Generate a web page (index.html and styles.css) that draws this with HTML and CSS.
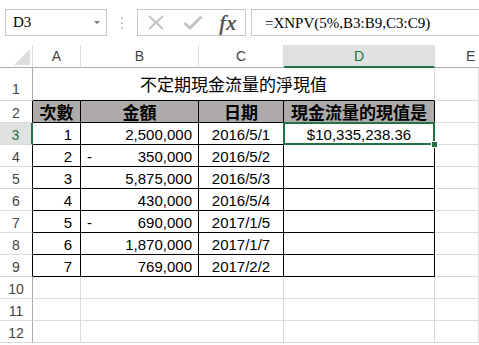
FILE: index.html
```html
<!DOCTYPE html>
<html lang="zh-Hant">
<head>
    <meta charset="UTF-8">
    <title>XNPV</title>
    <link rel="stylesheet" href="styles.css">
</head>
<body>

    <!-- Formula bar -->
    <div class="formula-bar">
        <div class="name-box">
            <span>D3</span>
            <span class="arrow"></span>
        </div>
        <div class="grip"><i></i><i></i><i></i></div>
        <div class="fx-box">
            <svg class="icon" width="18" height="15" viewBox="0 0 18 15">
                <path d="M2 1 L16 14 M16 1 L2 14" stroke="#c4c4c4" stroke-width="2" fill="none"/>
            </svg>
            <svg class="icon" width="20" height="15" viewBox="0 0 20 15">
                <path d="M1.5 8 L7 13 L18.5 1.5" stroke="#c4c4c4" stroke-width="3" fill="none"/>
            </svg>
            <span class="fx">fx</span>
        </div>
        <div class="formula">=XNPV(5%,B3:B9,C3:C9)</div>
    </div>

    <!-- Sheet -->
    <div class="sheet">
        <div class="corner">
            <svg width="16" height="16" viewBox="0 0 16 16"><polygon points="16,0 16,16 0,16" fill="#dedede"/></svg>
        </div>
        <div class="col-head">A</div>
        <div class="col-head">B</div>
        <div class="col-head">C</div>
        <div class="col-head active">D</div>
        <div class="col-head last">E</div>

        <div class="row-head tall">1</div>
        <div class="title">不定期現金流量的淨現值</div>
        <div class="cell"></div>

        <div class="row-head edge">2</div>
        <div class="th">次數</div>
        <div class="th">金額</div>
        <div class="th">日期</div>
        <div class="th">現金流量的現值是</div>
        <div class="cell"></div>

        <div class="row-head edge active">3</div>
        <div class="td num">1</div>
        <div class="td amt"><span></span><span>2,500,000</span></div>
        <div class="td date">2016/5/1</div>
        <div class="td result selected">$10,335,238.36</div>
        <div class="cell"></div>

        <div class="row-head edge">4</div>
        <div class="td num">2</div>
        <div class="td amt"><span>-</span><span>350,000</span></div>
        <div class="td date">2016/5/2</div>
        <div class="td"></div>
        <div class="cell"></div>

        <div class="row-head edge">5</div>
        <div class="td num">3</div>
        <div class="td amt"><span></span><span>5,875,000</span></div>
        <div class="td date">2016/5/3</div>
        <div class="td"></div>
        <div class="cell"></div>

        <div class="row-head edge">6</div>
        <div class="td num">4</div>
        <div class="td amt"><span></span><span>430,000</span></div>
        <div class="td date">2016/5/4</div>
        <div class="td"></div>
        <div class="cell"></div>

        <div class="row-head edge">7</div>
        <div class="td num">5</div>
        <div class="td amt"><span>-</span><span>690,000</span></div>
        <div class="td date">2017/1/5</div>
        <div class="td"></div>
        <div class="cell"></div>

        <div class="row-head edge">8</div>
        <div class="td num">6</div>
        <div class="td amt"><span></span><span>1,870,000</span></div>
        <div class="td date">2017/1/7</div>
        <div class="td"></div>
        <div class="cell"></div>

        <div class="row-head edge">9</div>
        <div class="td num">7</div>
        <div class="td amt"><span></span><span>769,000</span></div>
        <div class="td date">2017/2/2</div>
        <div class="td"></div>
        <div class="cell"></div>

        <div class="row-head">10</div>
        <div class="cell"></div><div class="cell"></div><div class="cell"></div><div class="cell"></div><div class="cell"></div>
        <div class="row-head">11</div>
        <div class="cell"></div><div class="cell"></div><div class="cell"></div><div class="cell"></div><div class="cell"></div>
        <div class="row-head">12</div>
        <div class="cell"></div><div class="cell"></div><div class="cell"></div><div class="cell"></div><div class="cell"></div>
    </div>

</body>
</html>
```

FILE: styles.css
```css
:root {
    --grid: #dadada;
    --head-line: #ababab;
    --green: #217346;
    --head-bg: #aeaaaa;
}

body {
    margin: 0;
    width: 479px;
    height: 345px;
    overflow: hidden;
    background: #fff;
    font-family: "Liberation Sans", Arial, sans-serif;
    color: #000;
}

/* Formula bar */
.formula-bar {
    display: flex;
    align-items: flex-start;
    height: 45px;
    padding: 9px 0 0 5px;
    box-sizing: border-box;
    white-space: nowrap;
}

.name-box {
    width: 102px;
    height: 27px;
    box-sizing: border-box;
    border: 1px solid #c6c6c6;
    display: flex;
    align-items: center;
    justify-content: space-between;
    padding: 0 6px 1px 7px;
    font-family: "Liberation Serif", serif;
    font-size: 15px;
}

.arrow {
    width: 0;
    height: 0;
    border-left: 3px solid transparent;
    border-right: 3px solid transparent;
    border-top: 3px solid #777;
}

.grip {
    width: 30px;
    height: 27px;
    display: flex;
    flex-direction: column;
    align-items: center;
    justify-content: center;
    gap: 3px;
}

.grip i {
    width: 2px;
    height: 2px;
    background: #c8c8c8;
}

.fx-box {
    width: 109px;
    height: 27px;
    box-sizing: border-box;
    border: 1px solid #c6c6c6;
    display: flex;
    align-items: center;
    padding-left: 9px;
    gap: 18px;
}

.fx {
    font-family: "Liberation Serif", serif;
    font-style: italic;
    font-size: 22px;
    color: #555;
    margin-left: -2px;
    letter-spacing: 1px;
    text-shadow: 0.4px 0 0 #555;
}

.formula {
    margin-left: 5px;
    flex: 1;
    height: 27px;
    box-sizing: border-box;
    border: 1px solid #c6c6c6;
    border-right: none;
    padding: 2px 0 0 13px;
    font-family: "Liberation Serif", serif;
    font-size: 15px;
    line-height: 22px;
}

/* Sheet grid */
.sheet {
    display: grid;
    grid-template-columns: 33px 48px 118px 85px 151px 44px;
    grid-template-rows: 23px 33px repeat(11, 22px);
}

.sheet > div {
    box-sizing: border-box;
    border-right: 1px solid var(--grid);
    border-bottom: 1px solid var(--grid);
    display: flex;
    align-items: center;
    white-space: nowrap;
}

.corner {
    justify-content: flex-end;
    align-items: flex-end !important;
    padding: 0 2px 2px 0;
    border-bottom-color: var(--head-line) !important;
}

.col-head {
    justify-content: center;
    color: #444;
    font-size: 14px;
    border-bottom-color: var(--head-line) !important;
}

.col-head.last {
    justify-content: flex-start;
    padding-left: 31px;
    border-right: none !important;
}

.col-head.active {
    background: #e1e1e1;
    color: var(--green);
    border-bottom: 2px solid var(--green) !important;
}

.row-head {
    justify-content: center;
    color: #444;
    font-size: 14px;
    border-right-color: var(--head-line) !important;
    padding-top: 2px;
}

.row-head.tall {
    align-items: flex-end !important;
    padding-bottom: 3px;
}

.row-head.edge {
    border-right-color: #000 !important;
}

.row-head.active {
    background: #e1e1e1;
    color: var(--green);
    border-right: 2px solid var(--green) !important;
}

.cell:nth-child(6n) {
    border-right: none;
}

/* Title row */
.title {
    grid-column: 2 / 6;
    justify-content: center;
    align-items: flex-end !important;
    padding-bottom: 6px;
    font-family: "Noto Sans CJK TC", sans-serif;
    font-size: 17px;
    line-height: 20px;
    border-bottom-color: #000 !important;
}

/* Table */
.th, .td {
    border-right-color: #000 !important;
    border-bottom-color: #000 !important;
}

.th {
    background: var(--head-bg);
    justify-content: center;
    font-family: "Noto Sans CJK TC", sans-serif;
    font-weight: 700;
    font-size: 17px;
    line-height: 20px;
    padding-top: 1px;
}

.td {
    font-size: 15px;
    padding-top: 2px;
}

.num {
    justify-content: flex-end;
    padding-right: 8px;
}

.amt {
    justify-content: space-between;
    padding: 2px 6px 0 6px;
}

.date, .result {
    justify-content: center;
}

.selected {
    position: relative;
}

.selected::before {
    content: "";
    position: absolute;
    top: -1px;
    left: -1px;
    right: -1px;
    bottom: -1px;
    border: 2px solid var(--green);
    z-index: 1;
}

.selected::after {
    content: "";
    position: absolute;
    right: -4px;
    bottom: -4px;
    width: 5px;
    height: 5px;
    background: var(--green);
    border: 1px solid #fff;
    z-index: 2;
}
```
